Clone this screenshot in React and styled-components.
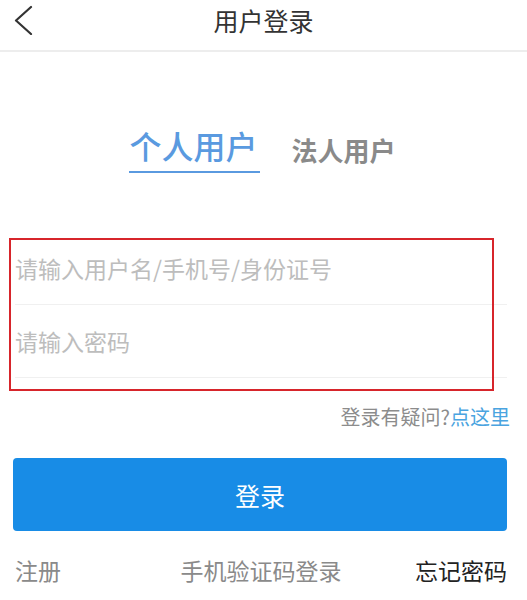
import React from "react";
import styled, { createGlobalStyle } from "styled-components";

const Global = createGlobalStyle`
  html, body { margin: 0; padding: 0; background: #fff; }
  body { font-family: "Noto Sans CJK SC", "Noto Sans", sans-serif; }
  * { box-sizing: border-box; }
`;

const Page = styled.div`
  width: 527px;
  min-height: 600px;
  background: #fff;
`;

const Header = styled.header`
  display: grid;
  grid-template-columns: 1fr auto 1fr;
  align-items: center;
  height: 52px;
  padding-bottom: 10px;
  border-bottom: 2px solid #ededed;
`;

const Back = styled.button`
  justify-self: start;
  display: flex;
  align-items: center;
  background: none;
  border: 0;
  padding: 0 0 0 14px;
  cursor: pointer;
`;

const Title = styled.h1`
  margin: 0;
  font-size: 25px;
  font-weight: 400;
  line-height: 25px;
  color: #333;
`;

const Body = styled.main`
  padding: 0 20px 0 13px;
`;

const Tabs = styled.nav`
  display: flex;
  justify-content: center;
  align-items: flex-end;
  gap: 32px;
  margin-top: 77px;
  padding-left: 7px;
`;

const Tab = styled.div`
  font-size: ${(p) => (p.$active ? "32px" : "26px")};
  line-height: 1;
  font-weight: ${(p) => (p.$active ? 500 : 700)};
  color: ${(p) => (p.$active ? "#5a9ae0" : "#8a8a8a")};
  padding: 0 2px 10px 0;
  border-bottom: 2px solid ${(p) => (p.$active ? "#5a9ae0" : "transparent")};
  margin-bottom: ${(p) => (p.$active ? "0" : "-2px")};
`;

const Form = styled.form`
  position: relative;
  margin-top: 59px;
  padding-left: 2px;
`;

const Row = styled.div`
  display: flex;
  align-items: center;
  height: 73px;
  border-bottom: 1px solid #f0f0f0;
`;

const Input = styled.input`
  flex: 1;
  border: 0;
  outline: none;
  padding: 0;
  font-family: inherit;
  font-size: 23px;
  color: #333;
  background: transparent;
  &::placeholder { color: #bdbdbd; }
`;

const Highlight = styled.div`
  position: absolute;
  left: -4px;
  top: 6px;
  width: 485px;
  height: 153px;
  border: 2px solid #d7252b;
  pointer-events: none;
`;

const Help = styled.p`
  margin: 29px -3px 0 0;
  text-align: right;
  font-size: 20px;
  line-height: 20px;
  color: #8c8c8c;
`;

const HelpLink = styled.a`
  color: #4aa4e0;
  text-decoration: none;
`;

const Submit = styled.button`
  display: block;
  width: 100%;
  height: 73px;
  margin-top: 31px;
  border: 0;
  border-radius: 4px;
  background: #188ce6;
  color: #fff;
  font-family: inherit;
  font-size: 25px;
  cursor: pointer;
`;

const Links = styled.div`
  display: grid;
  grid-template-columns: 1fr auto 1fr;
  align-items: center;
  margin-top: 28px;
  padding-left: 2px;
`;

const LinkText = styled.span`
  font-size: 23px;
  line-height: 23px;
  color: ${(p) => (p.$dark ? "#222" : "#8a8a8a")};
  justify-self: ${(p) => p.$align || "center"};
`;

export default function App() {
  return (
    <Page>
      <Global />
      <Header>
        <Back aria-label="返回">
          <svg width="20" height="30" viewBox="0 0 20 30">
            <polyline
              points="17,2 2,15.5 17,29"
              fill="none"
              stroke="#333"
              strokeWidth="2.2"
              strokeLinecap="round"
              strokeLinejoin="round"
            />
          </svg>
        </Back>
        <Title>用户登录</Title>
        <span />
      </Header>
      <Body>
        <Tabs>
          <Tab $active>个人用户</Tab>
          <Tab>法人用户</Tab>
        </Tabs>
        <Form onSubmit={(e) => e.preventDefault()}>
          <Row>
            <Input placeholder="请输入用户名/手机号/身份证号" />
          </Row>
          <Row>
            <Input type="password" placeholder="请输入密码" />
          </Row>
          <Highlight />
        </Form>
        <Help>
          登录有疑问?<HelpLink href="#">点这里</HelpLink>
        </Help>
        <Submit>登录</Submit>
        <Links>
          <LinkText $align="start">注册</LinkText>
          <LinkText>手机验证码登录</LinkText>
          <LinkText $align="end" $dark>忘记密码</LinkText>
        </Links>
      </Body>
    </Page>
  );
}
